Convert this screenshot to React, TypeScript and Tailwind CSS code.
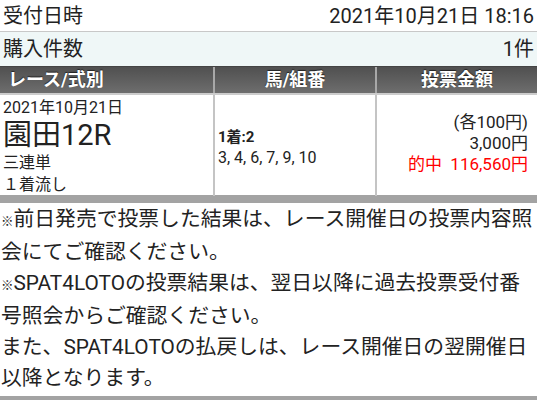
const Kome = () => <span className="text-[12.5px]">※</span>

export default function App() {
  return (
    <div
      className="w-[537px] h-[400px] overflow-hidden bg-white text-[#222]"
      style={{ fontFamily: 'Roboto, "Noto Sans CJK JP", sans-serif' }}
    >
      <div className="flex items-center justify-between h-[32px] px-[3px] border-b border-[#c8c8c8] text-[20px] leading-none">
        <span>受付日時</span>
        <span>2021年10月21日 18:16</span>
      </div>
      <div className="flex items-center justify-between h-[34px] px-[3px] bg-[#eff7f7] text-[20px] leading-none">
        <span>購入件数</span>
        <span>1件</span>
      </div>
      <div className="grid grid-cols-[215px_162px_1fr] h-[29px] border-t border-[#444] border-b-2 border-b-[#cccccc] bg-gradient-to-b from-[#505050] to-[#6e6e6e] text-white font-bold text-[18px] leading-none [text-shadow:0_-1px_1px_#222]">
        <div className="flex items-center px-[8px] border-r-2 border-[#a8a8a8]">レース/式別</div>
        <div className="flex items-center justify-center border-r-2 border-[#a8a8a8]">馬/組番</div>
        <div className="flex items-center justify-center">投票金額</div>
      </div>
      <div className="grid grid-cols-[215px_162px_1fr] h-[100px]">
        <div className="flex flex-col px-[3px] pt-[2px] border-r-2 border-[#c4c4c4] leading-none">
          <span className="text-[16px] h-[21px] leading-[21px]">2021年10月21日</span>
          <span className="text-[29px] h-[34px] leading-[34px]">園田12R</span>
          <span className="text-[16px] h-[22px] leading-[22px]">三連単</span>
          <span className="text-[16px] h-[22px] leading-[22px]">１着流し</span>
        </div>
        <div className="flex flex-col justify-center px-[3px] pt-[4px] border-r-2 border-[#c4c4c4]">
          <span className="text-[15px] font-bold leading-[19px]">1着:2</span>
          <span className="text-[16px] leading-[21px]">3, 4, 6, 7, 9, 10</span>
        </div>
        <div className="flex flex-col items-end justify-center pr-[9px] pb-[4px] text-[17px] leading-[21px]">
          <span>(各100円)</span>
          <span>3,000円</span>
          <span className="text-[#ff0000] whitespace-pre">的中  116,560円</span>
        </div>
      </div>
      <div className="h-[8px] bg-[#a3a3a3]" />
      <div className="px-[1px] pt-[1px] text-[20.8px] leading-[31px]">
        <p><Kome />前日発売で投票した結果は、レース開催日の投票内容照会にてご確認ください。</p>
        <p><Kome />SPAT4LOTOの投票結果は、翌日以降に過去投票受付番号照会からご確認ください。</p>
        <p>また、SPAT4LOTOの払戻しは、レース開催日の翌開催日以降となります。</p>
      </div>
      <div className="h-[8px] bg-[#a3a3a3] mt-[2px]" />
    </div>
  )
}
